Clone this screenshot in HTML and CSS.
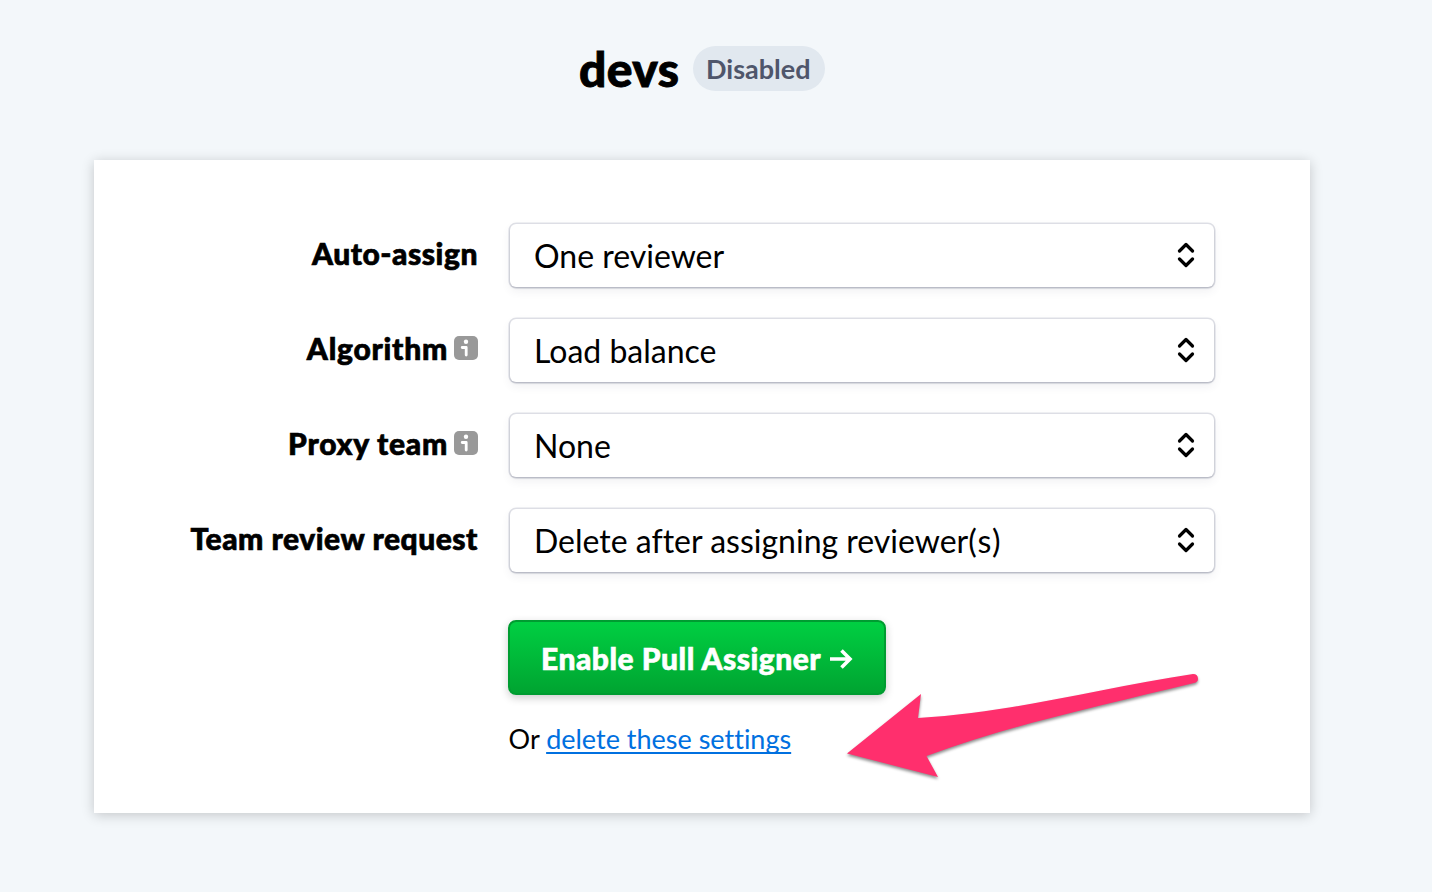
FILE: index.html
```html
<!DOCTYPE html>
<html lang="en">
<head>
<meta charset="utf-8">
<title>devs</title>
<link rel="stylesheet" href="styles.css">
</head>
<body>
<header class="header"><h1 class="title">devs</h1><span class="badge">Disabled</span></header>
<main class="card">
  <div class="row"><div class="label"><span>Auto-assign</span></div><div class="select"><span>One reviewer</span><svg class="chev" viewBox="0 0 18 26"><path d="M2.500 9 9 2.500 15.500 9M2.500 17 9 23.500 15.500 17"/></svg></div></div>
  <div class="row"><div class="label"><span class="wide">Algorithm</span><svg class="info" viewBox="0 0 24 24"><rect width="24" height="24" rx="5" fill="#999"/><circle cx="12" cy="5.700" r="2.200" fill="#fff"/><path d="M8.200 11.500h4v7.500" fill="none" stroke="#fff" stroke-width="2.800" stroke-linecap="round" stroke-linejoin="round"/></svg></div><div class="select"><span>Load balance</span><svg class="chev" viewBox="0 0 18 26"><path d="M2.500 9 9 2.500 15.500 9M2.500 17 9 23.500 15.500 17"/></svg></div></div>
  <div class="row"><div class="label"><span class="wide">Proxy team</span><svg class="info" viewBox="0 0 24 24"><rect width="24" height="24" rx="5" fill="#999"/><circle cx="12" cy="5.700" r="2.200" fill="#fff"/><path d="M8.200 11.500h4v7.500" fill="none" stroke="#fff" stroke-width="2.800" stroke-linecap="round" stroke-linejoin="round"/></svg></div><div class="select"><span>None</span><svg class="chev" viewBox="0 0 18 26"><path d="M2.500 9 9 2.500 15.500 9M2.500 17 9 23.500 15.500 17"/></svg></div></div>
  <div class="row"><div class="label"><span>Team review request</span></div><div class="select"><span>Delete after assigning reviewer<span class="suffix">(s)</span></span><svg class="chev" viewBox="0 0 18 26"><path d="M2.500 9 9 2.500 15.500 9M2.500 17 9 23.500 15.500 17"/></svg></div></div>
  <div class="actions">
    <button class="button"><span>Enable Pull Assigner</span><svg class="go" viewBox="0 0 24 20"><path d="M1 10h20M12.500 1.500l8.500 8.500-8.500 8.500"/></svg></button>
    <p class="alt">Or <a class="link" href="#">delete these settings</a></p>
  </div>
</main>
<svg class="arrow" viewBox="830 660 390 130"><path d="M847 753.500 921 694 918 718C1010 713 1100 688 1193 674Q1198 674 1198 679 1198 682 1194 683C1100 706 1010 725 926.500 756L938 777Z"/></svg>
</body>
</html>
```
FILE: styles.css
```css
* { box-sizing: border-box; }
body { margin: 0; height: 892px; overflow: hidden; background: #f3f7fa; color: #000; font-family: Lato, sans-serif; font-variant-ligatures: none; }
.header { display: flex; align-items: center; height: 160px; padding: 0 0 24px 579px; }
.title { margin: 2px 0 0; width: 100px; font-size: 48px; line-height: 58px; font-weight: 900; letter-spacing: .4px; -webkit-text-stroke: .9px #000; }
.badge { margin-left: 14px; width: 132px; height: 45px; padding: 0 13px; border-radius: 23px; background: #e1e8ef; color: #4f566b; font-size: 27px; font-weight: 700; line-height: 45px; }
.card { width: 1216px; height: 653px; margin-left: 94px; padding-top: 64px; background: #fff; box-shadow: 0 2px 12px rgba(0,0,0,.2); }
.row { display: flex; height: 63px; margin-bottom: 32px; }
.label { display: flex; justify-content: flex-end; width: 384px; margin: -3px 32px 0 0; font-size: 30px; font-weight: 900; line-height: 64px; letter-spacing: .54px; white-space: nowrap; -webkit-text-stroke: .7px #000; }
.wide { letter-spacing: .75px; }
.info { width: 24px; height: 24px; margin: 20px 0 0 6px; }
.select { display: flex; align-items: center; justify-content: space-between; width: 704px; height: 63px; padding: 0 19px 0 24px; border-radius: 6px; background: #fff; box-shadow: 0 0 0 1.500px rgba(60,66,110,.15), 0 1px 2px rgba(60,66,87,.25), 0 4px 10px rgba(60,66,87,.08); font-size: 32px; line-height: 38px; }
.select > span { margin-top: 1px; }
.suffix { letter-spacing: 1.300px; }
.chev { width: 18px; height: 26px; margin-top: -1px; fill: none; stroke: #000; stroke-width: 3.200; stroke-linecap: round; stroke-linejoin: round; }
.actions { padding: 16px 0 0 414px; }
.button { display: flex; align-items: center; width: 378px; height: 75px; padding: 0 31px; border: 2px solid #009c31; border-radius: 8px; background: linear-gradient(#00cf42,#00a431); color: #fff; font: 900 30px Lato, sans-serif; letter-spacing: .5px; -webkit-text-stroke: .6px #fff; box-shadow: 0 3px 9px rgba(0,0,0,.2); white-space: nowrap; }
.go { width: 24px; height: 20px; margin: 2px 0 0 8px; flex: none; fill: none; stroke: #fff; stroke-width: 3.600; }
.alt { margin: 27px 0 0 .6px; font-size: 27px; line-height: 34px; }
.link { color: #0070e0; text-decoration: underline 2px; text-underline-offset: 3px; text-decoration-skip-ink: none; }
.arrow { position: absolute; left: 830px; top: 660px; width: 390px; height: 130px; fill: #ff2f6d; filter: drop-shadow(0 2px 1.500px rgba(0,0,0,.45)); }
```
